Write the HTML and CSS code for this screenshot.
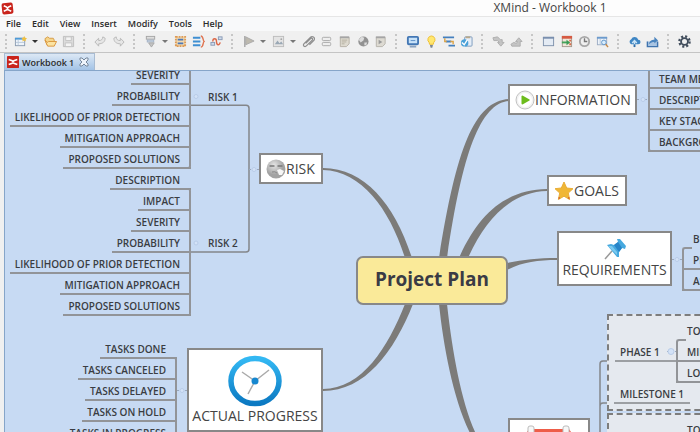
FILE: index.html
```html
<!DOCTYPE html>
<html lang="en">
<head>
  <meta charset="UTF-8" />
  <title>XMind - Workbook 1</title>
  <link rel="stylesheet" href="styles.css">
</head>
<body>
  <header class="titlebar">
    <svg class="logo" viewBox="0 0 14 14"><rect x="1" y="1" width="12" height="12" rx="2" fill="#c9241c" transform="rotate(-6 7 7)"/><path d="M3 4l3 1.500 1 1 1-1L11 4M3 10l3-1.500 1-1 1 1L11 10" fill="none" stroke="#fff" stroke-width="1.600"/></svg>
    <h1>XMind - Workbook 1</h1>
  </header>

  <nav class="menubar">
    <button>File</button>
    <button>Edit</button>
    <button>View</button>
    <button>Insert</button>
    <button>Modify</button>
    <button>Tools</button>
    <button>Help</button>
  </nav>

  <div class="toolbar">
    <span class="grip"></span>
    <button aria-label="New"><svg viewBox="0 0 14 14"><rect x="1.500" y="3.500" width="10" height="8" fill="#eef4fb" stroke="#8a9bb0"/><path d="M1 3h9v2H1z" fill="#4d9bd8"/><path d="M4.500 5v6M2 8h9" stroke="#b9c9da"/><path d="M11 1l1 2 2 .5-1.500 1.500.3 2L11 6l-2 1 .4-2L8 3.500 10 3z" fill="#f0c040"/></svg></button>
    <button class="caret dark" aria-label="New options"></button>
    <button aria-label="Open"><svg viewBox="0 0 14 14"><path d="M1 4l3-2 2 1.500h4l1 2v5H3z" fill="#f5d58b" stroke="#d59a45"/><path d="M1 5.500L4 12h7l2.500-5H5L3.500 8z" fill="#fbe3a2" stroke="#d9953c"/></svg></button>
    <button aria-label="Save"><svg viewBox="0 0 14 14"><path d="M1.500 1.500h11v11h-11z" fill="#dcdcdc" stroke="#bdbdbd"/><path d="M4 2h6v4H4zM3.500 8.500h7v4h-7z" fill="#f4f4f4" stroke="#c2c2c2"/></svg></button>
    <span class="grip"></span>
    <button aria-label="Undo"><svg viewBox="0 0 14 14"><path d="M1 7.500l4-4v2.500c3 0 4-1 4.500-4l2.500 1.500c0 4-3 6-7 6V12z" fill="#e6e6e6" stroke="#b8b8b8"/></svg></button>
    <button aria-label="Redo"><svg viewBox="0 0 14 14"><path d="M13 7.500l-4-4v2.500c-3 0-4-1-4.500-4L2 3.500c0 4 3 6 7 6V12z" fill="#e6e6e6" stroke="#b8b8b8"/></svg></button>
    <span class="grip"></span>
    <button aria-label="Topic"><svg viewBox="0 0 14 14"><rect x="2.500" y="1.500" width="9" height="3" fill="#dedede" stroke="#a5a5a5"/><rect x="3.500" y="5.500" width="7" height="2" fill="#cfd9e6" stroke="#a3b2c6"/><path d="M5 8.500h6l-3 4.500z" fill="#c4c4c4" stroke="#a8a8a8"/></svg></button>
    <button class="caret" aria-label="Topic options"></button>
    <button aria-label="Boundary"><svg viewBox="0 0 14 14"><rect x="2" y="2" width="10" height="10" fill="#f3d9ae" stroke="#dc9a55" stroke-width="2" stroke-dasharray="2 1"/><path d="M4 4h6v2H4zM4 8h6v2H4z" fill="#4c78b8"/></svg></button>
    <button aria-label="Summary"><svg viewBox="0 0 14 14"><path d="M1 3h8M1 7h8M1 11h8" stroke="#3f8fd2" stroke-width="2"/><path d="M9.500 1c3 0 2 5 3.500 6-1.500 1-.5 6-3.500 6" fill="none" stroke="#df7350" stroke-width="1.500"/></svg></button>
    <button aria-label="Relationship"><svg viewBox="0 0 14 14"><rect x="1" y="8" width="4" height="3" fill="#cfdcec" stroke="#8a9ab5"/><rect x="9" y="2" width="4" height="3" fill="#cfdcec" stroke="#8a9ab5"/><path d="M3 7c0-4 4-4 4 0s3 5 4 1" fill="none" stroke="#dc6848" stroke-width="1.500"/></svg></button>
    <span class="grip"></span>
    <button aria-label="Marker"><svg viewBox="0 0 14 14"><path d="M3 1v12" stroke="#a7a7a7" stroke-width="1.500"/><path d="M4 2l9 4.500-9 4z" fill="#bdb9ae" stroke="#aaa"/></svg></button>
    <button class="caret" aria-label="Marker options"></button>
    <button aria-label="Image"><svg viewBox="0 0 14 14"><rect x="1.500" y="1.500" width="11" height="11" fill="#e4e4e4" stroke="#bcbcbc"/><path d="M3 10l3-4 2 3 2-2 2 3z" fill="#9aa8b5"/><circle cx="10" cy="4.500" r="1" fill="#a5a5a5"/></svg></button>
    <button class="caret" aria-label="Image options"></button>
    <button aria-label="Attachment"><svg viewBox="0 0 14 14"><path d="M4 9l5-5c2-1.500 3 0 2 1.500l-6 6c-2 2-4.500 0-3-2l7-7c2-2 5.500 0 4 3l-5 5" fill="none" stroke="#8e8e8e" stroke-width="1.300"/></svg></button>
    <button aria-label="Label"><svg viewBox="0 0 14 14"><rect x="2.500" y="2.500" width="9" height="3.500" rx="1" fill="#eee" stroke="#a8a8a8"/><rect x="2.500" y="8" width="9" height="3.500" rx="1" fill="#eee" stroke="#a8a8a8"/></svg></button>
    <button aria-label="Notes"><svg viewBox="0 0 14 14"><path d="M2.500 2.500h9.500v7l-3 3H2.500z" fill="#dedad0" stroke="#b5b0a5"/><path d="M2 2.500h10" stroke="#a5a5a5" stroke-width="2"/><path d="M4 5.500h6M4 7.500h5M4 9.500h3" stroke="#b4af9f"/></svg></button>
    <button aria-label="Hyperlink"><svg viewBox="0 0 14 14"><circle cx="8" cy="7" r="5.500" fill="#929292"/><path d="M3 5l3-3 3 1-1 3-3 2zM9 8l3 0-1 3-2 0z" fill="#dcdcdc"/></svg></button>
    <button aria-label="Audio notes"><svg viewBox="0 0 14 14"><path d="M2.500 2.500H12v7l-3 3H2.500z" fill="#dddad2" stroke="#b5b2aa"/><path d="M2 2.500h10" stroke="#a5a5a5" stroke-width="2"/><path d="M5 5v5l4-2.500z" fill="#9a9a9a"/></svg></button>
    <span class="grip"></span>
    <button aria-label="Presentation"><svg viewBox="0 0 14 14"><rect x="2" y="2" width="11" height="8" rx="1" fill="#c8e2f8" stroke="#4377b4" stroke-width="2"/><path d="M4 12.500h7" stroke="#8ba3c0" stroke-width="2"/><path d="M5 6h5" stroke="#5c90c8"/></svg></button>
    <button aria-label="Brainstorming"><svg viewBox="0 0 14 14"><path d="M8 1a4 4 0 0 0-2.500 7L6 10h4l.5-2A4 4 0 0 0 8 1z" fill="#ffe76f" stroke="#eebd2d"/><path d="M6.500 11.500h3M7 13h2" stroke="#7c8791" stroke-width="1.500"/></svg></button>
    <button aria-label="Gantt"><svg viewBox="0 0 14 14"><path d="M1 2.500h12M4 7h6M7 11.500h7" stroke="#4580be" stroke-width="2"/><path d="M3 3.500V7h2M9 7l3 0v3" fill="none" stroke="#dba347" stroke-width="1.500"/></svg></button>
    <button aria-label="Task info"><svg viewBox="0 0 14 14"><rect x="5" y="2" width="8" height="10" rx="1" fill="#e5edf7" stroke="#7b99bd"/><path d="M6 1.500h5v2H6z" fill="#b9a98a"/><circle cx="5" cy="8.500" r="4" fill="#4ba1d8"/><path d="M2 8l2.500 2.500L8 5" fill="none" stroke="#fff" stroke-width="1.500"/></svg></button>
    <span class="grip"></span>
    <button aria-label="Drill down"><svg viewBox="0 0 14 14"><path d="M1 3l5-1 3 3h2v3h2l-3.500 4L6 8h2L6 6 2 6z" fill="#c4c4c4" stroke="#adadad"/></svg></button>
    <button aria-label="Drill up"><svg viewBox="0 0 14 14"><path d="M1 10l3-2 3 1 1-2H6l3.500-4L13 7h-2v5H2z" fill="#c4c4c4" stroke="#adadad"/></svg></button>
    <span class="grip"></span>
    <button aria-label="Outline"><svg viewBox="0 0 14 14"><rect x="1.500" y="2.500" width="11" height="9" fill="#e4ebf4" stroke="#7e91ac"/><path d="M1 3h12" stroke="#7a8fae" stroke-width="2"/></svg></button>
    <button aria-label="Markers"><svg viewBox="0 0 14 14"><rect x="2.500" y="1.500" width="10" height="11" fill="#f0e7da" stroke="#a5988c"/><path d="M2 2.500h11" stroke="#d65a42" stroke-width="3"/><path d="M2 8h6" stroke="#44a35a" stroke-width="2"/><path d="M7 5l4 3-4 3z" fill="#3c9b56"/><path d="M10 6h2M10 10h2" stroke="#d66a4b" stroke-width="2"/></svg></button>
    <button aria-label="History"><svg viewBox="0 0 14 14"><circle cx="7" cy="7" r="5" fill="#f0f0f0" stroke="#a8a8a8" stroke-width="2"/><path d="M7 3.500V7h3" fill="none" stroke="#777" stroke-width="1.500"/></svg></button>
    <button aria-label="Search"><svg viewBox="0 0 14 14"><rect x="1.500" y="2.500" width="10" height="8" fill="#edf3fa" stroke="#9aabc2"/><path d="M1 3h11" stroke="#6c9bcd" stroke-width="2"/><path d="M4.500 4v6" stroke="#b7c6d8"/><circle cx="8.500" cy="8" r="2.500" fill="#d8ecfb" stroke="#5e93c7"/><path d="M10.500 10l2.500 3" stroke="#c88843" stroke-width="1.500"/></svg></button>
    <span class="grip"></span>
    <button aria-label="Upload"><svg viewBox="0 0 14 14"><path d="M3.500 10a3 3 0 0 1 0-5.500A4 4 0 0 1 11 5a2.500 2.500 0 0 1 0 5z" fill="#3f86c4"/><path d="M7 13V6M4.500 8.500L7 6l2.500 2.500" fill="none" stroke="#cbe4f6" stroke-width="1.500"/><path d="M7 10v3" stroke="#2d6ca8" stroke-width="2"/></svg></button>
    <button aria-label="Share"><svg viewBox="0 0 14 14"><path d="M1.500 7v5.500h11V7" fill="#a9c4e2" stroke="#3f73ae" stroke-width="1.500"/><path d="M3 10c1-4 3-5 6-5V2l4 4-4 3V7.500C7 7.500 5 8 3 10z" fill="#4b84be"/></svg></button>
    <span class="grip"></span>
    <button aria-label="Settings"><svg viewBox="0 0 14 14"><circle cx="7" cy="7" r="5.500" fill="none" stroke="#414d5c" stroke-width="2.500" stroke-dasharray="2.200 2.120"/><circle cx="7" cy="7" r="3.700" fill="none" stroke="#414d5c" stroke-width="2"/></svg></button>
  </div>

  <div class="tabs">
    <button class="tab">
      <svg class="logo" viewBox="0 0 14 14"><rect width="14" height="14" rx="1" fill="#c9241c"/><path d="M2 4l4 1.500 1 1 1-1L12 4M2 10l4-1.500 1-1 1 1L12 10" fill="none" stroke="#fff" stroke-width="1.800"/></svg>
      Workbook 1
      <svg class="close" viewBox="0 0 10 10"><path d="M1 1h2l2 2 2-2h2v2L7 5l2 2v2H7L5 7 3 9H1V7l2-2-2-2z" fill="#eef4fb" stroke="#76879b"/></svg>
    </button>
  </div>

  <main class="canvas">
    <!-- boundaries sit below the connecting lines -->
    <div class="boundary phase-one"></div>
    <div class="boundary phase-two"></div>

    <svg class="links" width="695" height="400" viewBox="5 71 695 400">
      <g fill="#7c7b79">
        <path d="M323 168C365 168 395 205 412 258H405C390 210 362 171 323 170Z"/>
        <path d="M323 391C365 391 394 352 413 304H405C388 347 362 389 323 389Z"/>
        <path d="M509 99C474 101 456 150 439 258H447C462 155 480 103 509 101Z"/>
        <path d="M547 189C508 190 480 210 459 258H468C485 220 510 192 547 191Z"/>
        <path d="M507 263C522 260 538 258 557 258V260C538 260 522 262 507 270Z"/>
        <path d="M439 304C446 370 466 465 508 468V466C474 462 456 385 447 304Z"/>
      </g>
      <g fill="none" stroke="#84868a" stroke-width="1.500">
        <path d="M190 105.300H246Q249 105.300 249 108.300V249Q249 252 246 252H190"/>
        <path d="M607 361H603Q600 361 600 364V471M600 406Q600 403 603 403H607"/>
        <path d="M615 361H700M614 403H690"/>
      </g>
      <g fill="none" stroke="#9aa8bd" stroke-dasharray="2 2">
        <path d="M249 169.500H259M177 390.500H187M637 99.500H648M672 259.500H682M667 351.500H676"/>
      </g>
      <g fill="#d3e2f7" stroke="#b9cce8">
        <circle cx="254" cy="169.500" r="2"/>
        <circle cx="182" cy="390.500" r="2"/>
        <circle cx="643" cy="99.500" r="2"/>
        <circle cx="677" cy="259.500" r="2"/>
        <circle cx="196" cy="96.500" r="2"/>
        <circle cx="196" cy="243" r="2"/>
        <circle cx="671" cy="351.500" r="3"/>
      </g>
    </svg>

    <ul class="branch left risk-one">
      <li>SEVERITY</li>
      <li>PROBABILITY</li>
      <li>LIKELIHOOD OF PRIOR DETECTION</li>
      <li>MITIGATION APPROACH</li>
      <li>PROPOSED SOLUTIONS</li>
    </ul>
    <span class="label risk-one-label">RISK 1</span>

    <ul class="branch left risk-two">
      <li>DESCRIPTION</li>
      <li>IMPACT</li>
      <li>SEVERITY</li>
      <li>PROBABILITY</li>
      <li>LIKELIHOOD OF PRIOR DETECTION</li>
      <li>MITIGATION APPROACH</li>
      <li>PROPOSED SOLUTIONS</li>
    </ul>
    <span class="label risk-two-label">RISK 2</span>

    <ul class="branch left tasks">
      <li>TASKS DONE</li>
      <li>TASKS CANCELED</li>
      <li>TASKS DELAYED</li>
      <li>TASKS ON HOLD</li>
      <li>TASKS IN PROGRESS</li>
    </ul>

    <ul class="branch right info-list">
      <li>TEAM MEMBERS</li>
      <li>DESCRIPTION</li>
      <li>KEY STAGES</li>
      <li>BACKGROUND</li>
    </ul>

    <ul class="branch right req-list">
      <li>BUDGET</li>
      <li>PEOPLE</li>
      <li>ASSETS</li>
    </ul>

    <span class="label phase-label">PHASE 1</span>
    <span class="label milestone-label">MILESTONE 1</span>
    <ul class="branch right phase-list">
      <li>TO DO</li>
      <li>MILESTONE</li>
      <li>LOCATION</li>
    </ul>
    <ul class="branch right phase-two-list">
      <li>TO DO</li>
    </ul>

    <div class="topic risk">
      <svg width="20" height="20" viewBox="0 0 20 20">
        <defs><radialGradient id="gray" cx=".4" cy=".3"><stop offset="0" stop-color="#e6e6e6"/><stop offset="1" stop-color="#a2a2a2"/></radialGradient></defs>
        <circle cx="10" cy="10" r="9.500" fill="url(#gray)"/>
        <path d="M3.500 7h5M11.500 7h5" stroke="#777" stroke-width="1.500"/>
        <path d="M6 13q3-1 5 1" fill="none" stroke="#888"/>
        <path d="M11 11l3-1 4 2-2 4-3 0z" fill="#f6f6f6"/>
      </svg>
      RISK
    </div>

    <div class="topic information">
      <svg width="20" height="20" viewBox="0 0 20 20">
        <circle cx="10" cy="10" r="9" fill="#f2f2f2" stroke="#c2c2c2"/>
        <circle cx="10" cy="10" r="7" fill="#fff"/>
        <path d="M6.500 6.500q0-1 1-1L14.500 9.500q.5.500 0 1L7.500 14.500q-1 0-1-1z" fill="#6cbc1c"/>
      </svg>
      INFORMATION
    </div>

    <div class="topic goals">
      <svg width="20" height="20" viewBox="0 0 20 20">
        <path d="M10 1l2.700 6 6.300.7-4.700 4.300L15.600 18.500 10 15.200 4.400 18.500 5.700 12 1 7.700 7.300 7z" fill="#f0b736" stroke="#e9ae38"/>
        <path d="M4.500 17h1.500M14 17h1.500" stroke="#d56030" stroke-width="1.500"/>
      </svg>
      GOALS
    </div>

    <div class="topic tall requirements">
      <svg width="24" height="22" viewBox="0 0 24 22">
        <path d="M2 21L9 13" stroke="#999" stroke-width="1.500"/>
        <path d="M4 7l4-1 3 1 4-3-1-3 3 0 6 7-1 3-3-1-3 4 0 5-2 0z" fill="#46a9df"/>
        <path d="M11 7l4-3 4 6-3 4z" fill="#2784c8"/>
        <path d="M5 8l4 0 5 6 0 3z" fill="#7bcaf0"/>
      </svg>
      REQUIREMENTS
    </div>

    <div class="topic tall progress">
      <svg width="54" height="52" viewBox="0 0 54 52">
        <defs><linearGradient id="ring" x2="0" y2="1"><stop offset="0" stop-color="#33b8f3"/><stop offset="1" stop-color="#0b79c2"/></linearGradient></defs>
        <ellipse cx="27" cy="26" rx="24" ry="22.500" fill="#fff" stroke="url(#ring)" stroke-width="5.500"/>
        <path d="M27 26L14 17M27 26L41 15M27 26L20 39" stroke="#aaa" stroke-width="1.500"/>
        <circle cx="27" cy="26" r="3.500" fill="#1687cf"/>
      </svg>
      ACTUAL PROGRESS
    </div>

    <div class="topic schedule">
      <svg width="50" height="30" viewBox="0 0 50 30">
        <path d="M5 4h40l4 6v20H1V10z" fill="#ee5d49"/>
        <rect x="4" y="1" width="6" height="9" rx="2" fill="#f7f7f7" stroke="#bbb"/>
        <rect x="39" y="1" width="6" height="9" rx="2" fill="#f7f7f7" stroke="#bbb"/>
      </svg>
    </div>

    <div class="topic central">Project Plan</div>
  </main>
</body>
</html>
```
FILE: styles.css
```css
* {
  margin: 0;
  padding: 0;
  box-sizing: border-box;
}

body {
  height: 100vh;
  display: flex;
  flex-direction: column;
  overflow: hidden;
  background: #f0f0f0;
  font-family: "Open Sans", "Noto Sans", sans-serif;
  font-size: 9px;
  color: #2b2b2b;
}

button {
  border: none;
  background: none;
  font: inherit;
  color: inherit;
}

svg {
  display: block;
  flex: none;
}

/* title and menus */
.titlebar {
  display: flex;
  align-items: center;
  height: 17px;
  padding-left: 1px;
  background: #fdfdfd;
  border-bottom: 1px solid #e6e6e6;
}

.logo {
  width: 13px;
  height: 13px;
}

.titlebar h1 {
  flex: 1;
  margin-left: 386px;
  font-size: 12px;
  font-weight: 400;
  line-height: 16px;
  text-align: center;
  color: #444;
}

.menubar {
  display: flex;
  gap: 11px;
  height: 14px;
  padding-left: 6px;
  background: #f8f9fa;
}

.menubar button {
  line-height: 14px;
  font-weight: 600;
}

/* toolbar */
.toolbar {
  display: flex;
  align-items: center;
  height: 22px;
  background: #f0f0f0;
  border-bottom: 1px solid #c4c4c4;
}

.toolbar button {
  display: flex;
  align-items: center;
  justify-content: center;
  flex: none;
  width: 18px;
  height: 18px;
}

.toolbar svg {
  width: 13px;
  height: 13px;
}

.toolbar .caret {
  width: 12px;
}

.caret::after {
  content: "";
  border: 3px solid transparent;
  border-top-color: #777;
  border-bottom: none;
}

.caret.dark::after {
  border-top-color: #333;
}

.grip {
  flex: none;
  display: flex;
  justify-content: center;
  width: 14px;
}

.grip:first-child {
  width: 11px;
}

.grip::after {
  content: "";
  height: 15px;
  border-left: 2px dotted #c6c6c6;
}

/* editor tabs */
.tabs {
  height: 17px;
  padding-left: 4px;
}

.tab {
  display: flex;
  align-items: center;
  gap: 3px;
  height: 17px;
  padding: 0 5px 0 2px;
  background: linear-gradient(#dce8f5, #a3c3e6);
  border: 1px solid #a9bcd2;
  border-bottom: none;
  font-weight: 600;
}

.tab .logo {
  width: 12px;
  height: 12px;
}

.close {
  width: 10px;
  height: 10px;
  margin-left: 2px;
}

/* mind map */
.canvas {
  position: relative;
  flex: 1;
  margin-left: 4px;
  overflow: hidden;
  background: #c7daf3;
  border-top: 1px solid #86a5c9;
  border-left: 1px solid #86a5c9;
}

.links {
  position: absolute;
  top: 0;
  left: 0;
}

.branch {
  position: absolute;
  display: flex;
  flex-direction: column;
  list-style: none;
  font-size: 10px;
  font-weight: 600;
  color: #3a3d42;
}

.branch li {
  height: 21px;
  padding: 3px 11px 0;
  border-bottom: 2px solid #929498;
  line-height: 16px;
  white-space: nowrap;
}

/* bracket that joins the rows */
.branch::after {
  content: "";
  position: absolute;
  top: 19px;
  bottom: 0;
  width: 8px;
  border: 2px solid #929498;
}

.left {
  align-items: flex-end;
}

.left li {
  padding-left: 5px;
}

.left::after {
  right: 0;
  border-left: none;
  border-radius: 0 3px 3px 0;
}

.right::after {
  left: 0;
  border-right: none;
  border-radius: 3px 0 0 3px;
}

.risk-one {
  top: -7px;
  right: calc(100% - 186px);
}

.risk-one::after,
.info-list::after {
  top: 0;
  border-top: none;
}

.risk-two {
  top: 98px;
  right: calc(100% - 186px);
}

.tasks {
  top: 267px;
  right: calc(100% - 172px);
}

.info-list {
  top: -3px;
  left: 643px;
}

.req-list {
  top: 157px;
  left: 677px;
}

.phase-list {
  top: 249px;
  left: 671px;
}

.phase-two-list {
  top: 348px;
  left: 671px;
}

.req-list li:first-child,
.phase-list li:first-child {
  border-bottom-color: transparent;
}

.label {
  position: absolute;
  font-size: 10px;
  font-weight: 600;
  line-height: 16px;
  white-space: nowrap;
  color: #3a3d42;
}

.risk-one-label {
  top: 18px;
  left: 203px;
}

.risk-two-label {
  top: 164px;
  left: 203px;
}

.phase-label {
  top: 273px;
  left: 615px;
}

.milestone-label {
  top: 315px;
  left: 615px;
}

.boundary {
  position: absolute;
  left: 602px;
  right: -10px;
  height: 97px;
  background: #e5e9ef;
  border: 2px dashed #7d7d7d;
}

.phase-one {
  top: 243px;
}

.phase-two {
  top: 342px;
}

.topic {
  position: absolute;
  display: flex;
  align-items: center;
  height: 31px;
  padding: 0 5px;
  background: #fff;
  border: 2px solid #888;
  font-size: 14px;
  line-height: 18px;
  white-space: nowrap;
  color: #444;
}

.topic.tall {
  flex-direction: column;
  justify-content: space-between;
  padding: 5px;
}

.risk {
  top: 82px;
  left: 254px;
  width: 64px;
}

.information {
  top: 13px;
  left: 503px;
  width: 129px;
}

.goals {
  top: 104px;
  left: 542px;
  width: 80px;
}

.topic.requirements {
  top: 160px;
  left: 552px;
  width: 115px;
  height: 55px;
}

.topic.progress {
  top: 277px;
  left: 182px;
  width: 136px;
  height: 84px;
}

.topic.schedule {
  top: 347px;
  left: 503px;
  width: 82px;
  height: 84px;
  align-items: flex-start;
  justify-content: center;
  padding-top: 5px;
}

.topic.central {
  top: 185px;
  left: 351px;
  width: 152px;
  height: 49px;
  justify-content: center;
  padding-bottom: 4px;
  background: #faea99;
  border-radius: 7px;
  font-size: 19px;
  font-weight: 700;
  color: #3a3b45;
}
```
